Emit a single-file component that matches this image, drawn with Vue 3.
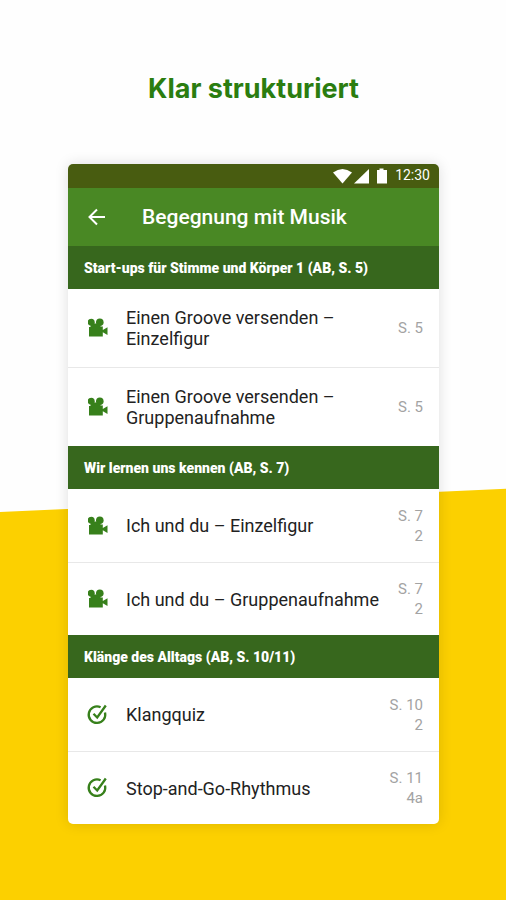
<script setup>
const sections = [
  {
    title: 'Start-ups für Stimme und Körper 1 (AB, S. 5)',
    items: [
      { icon: 'camera', text: 'Einen Groove versenden – Einzelfigur', refs: ['S. 5'], tall: true },
      { icon: 'camera', text: 'Einen Groove versenden – Gruppenaufnahme', refs: ['S. 5'], tall: true },
    ],
  },
  {
    title: 'Wir lernen uns kennen (AB, S. 7)',
    items: [
      { icon: 'camera', text: 'Ich und du – Einzelfigur', refs: ['S. 7', '2'] },
      { icon: 'camera', text: 'Ich und du – Gruppenaufnahme', refs: ['S. 7', '2'] },
    ],
  },
  {
    title: 'Klänge des Alltags (AB, S. 10/11)',
    items: [
      { icon: 'check', text: 'Klangquiz', refs: ['S. 10', '2'] },
      { icon: 'check', text: 'Stop-and-Go-Rhythmus', refs: ['S. 11', '4a'] },
    ],
  },
]
</script>

<template>
  <main class="page">
    <h1 class="headline">Klar strukturiert</h1>
    <div class="phone">
      <div class="status">
        <svg class="status-icons" viewBox="0 0 56 18" aria-hidden="true">
          <path d="M0 5.500Q9.500-1.500 19 5.500L9.500 16.500Z" />
          <path d="M36 2V16.500H21Z" />
          <path d="M46.500 1.500h4v1.500h3.500v13.500H44V3h2.500z" />
        </svg>
        <span>12:30</span>
      </div>
      <header class="bar">
        <button class="back" type="button" aria-label="Zurück">
          <svg viewBox="0 0 24 24" aria-hidden="true">
            <path d="M20 12H5M12 4.500L4.500 12L12 19.500" />
          </svg>
        </button>
        <h2>Begegnung mit Musik</h2>
      </header>
      <section v-for="section in sections" :key="section.title">
        <h3 class="section-title">{{ section.title }}</h3>
        <ul class="list">
          <li v-for="item in section.items" :key="item.text">
            <a class="row" :class="{ tall: item.tall }" href="#">
              <svg v-if="item.icon === 'camera'" class="icon" viewBox="0 0 20 20" aria-hidden="true">
                <circle cx="3.200" cy="4.300" r="3.500" />
                <circle cx="11.800" cy="4.300" r="3.800" />
                <path d="M2.500 5.500H12.500V8.500H14.800V12L19.500 9.200V17L14.800 14.200V18.500H1V9H2.500Z" />
              </svg>
              <svg v-else class="icon line" viewBox="0 0 20 20" aria-hidden="true">
                <path d="M12.600 2.200A8.300 8.300 0 1 0 17 7.500" />
                <path d="M5.500 8.800L9.200 12.500L17.800 0.500" />
              </svg>
              <span class="text">{{ item.text }}</span>
              <span class="refs">
                <span v-for="line in item.refs" :key="line">{{ line }}</span>
              </span>
            </a>
          </li>
        </ul>
      </section>
    </div>
  </main>
</template>

<style>
body {
  margin: 0;
  background: #fefefe;
}
</style>

<style scoped>
.page {
  position: relative;
  isolation: isolate;
  box-sizing: border-box;
  min-height: 100vh;
  padding: 72px 67px 76px 68px;
  font-family: Roboto, "Liberation Sans", sans-serif;
}

.page::before {
  content: "";
  position: absolute;
  inset: 0;
  z-index: -1;
  background: #fcd000;
  clip-path: polygon(0 56.9%, 100% 54.3%, 100% 100%, 0 100%);
}

h1,
h2,
h3,
ul {
  margin: 0;
  padding: 0;
}

.headline {
  margin-bottom: 58px;
  color: #2b7d10;
  font-family: Inter, sans-serif;
  font-size: 27px;
  font-weight: 700;
  line-height: 34px;
  text-align: center;
}

.phone {
  overflow: hidden;
  border-radius: 5px;
  background: #fff;
  box-shadow: 0 0 14px rgb(0 0 0 / 13%);
}

.status {
  display: flex;
  align-items: center;
  justify-content: flex-end;
  gap: 6px;
  height: 24px;
  padding-right: 9px;
  background: #485c10;
  color: #fff;
  font-size: 14px;
  line-height: 22px;
}

.status span {
  align-self: flex-start;
}

.status-icons {
  width: 56px;
  height: 18px;
  fill: #fff;
}

.bar {
  display: flex;
  align-items: center;
  gap: 33px;
  height: 58px;
  padding: 0 17px;
  background: #498824;
  color: #fff;
}

.bar h2 {
  font-size: 21px;
  font-weight: 500;
  line-height: 28px;
}

.back {
  display: grid;
  place-items: center;
  width: 24px;
  height: 24px;
  padding: 0;
  border: 0;
  background: none;
  cursor: pointer;
}

.back svg {
  width: 24px;
  height: 24px;
  fill: none;
  stroke: #fff;
  stroke-width: 2;
}

.section-title {
  padding: 2px 16px 0;
  background: #37671d;
  color: #fff;
  font-size: 14px;
  font-weight: 900;
  line-height: 41px;
}

.list {
  list-style: none;
}

.list li + li {
  border-top: 1px solid #e8e8e8;
}

.row {
  display: flex;
  align-items: center;
  gap: 16px;
  min-height: 73px;
  padding: 0 16px 0 20px;
  color: #222;
  text-decoration: none;
}

li + li .row {
  min-height: 72px;
}

.row.tall {
  min-height: 78px;
}

.icon {
  flex: none;
  width: 20px;
  height: 20px;
  margin-right: 2px;
  fill: #37801b;
}

.line {
  overflow: visible;
  fill: none;
  stroke: #37801b;
  stroke-width: 2.3;
}

.text {
  flex: 1;
  font-size: 18px;
  line-height: 21px;
}

.refs {
  display: grid;
  min-width: 24px;
  color: #a3a3a3;
  font-size: 15px;
  line-height: 20px;
  text-align: right;
}
</style>
